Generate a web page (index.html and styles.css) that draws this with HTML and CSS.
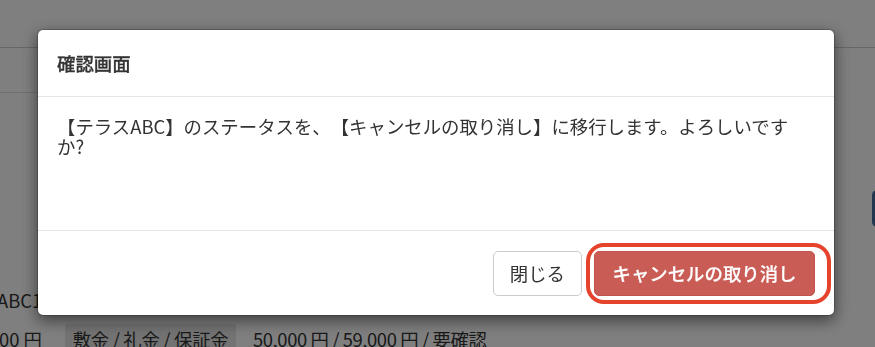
FILE: index.html
```html
<!DOCTYPE html>
<html lang="ja">
<head>
<meta charset="utf-8">
<title>確認画面</title>
<link rel="stylesheet" href="styles.css">
</head>
<body>
<div class="page">
  <div class="topbar"></div>
  <div class="subnav"></div>
  <div class="side-actions"><span class="side-btn"></span></div>
  <div class="row-name"><span class="name">ABC101</span></div>
  <div class="row-price">
    <div class="rent"><span>35,000 円</span></div>
    <span class="tag">敷金 / 礼金 / 保証金</span>
    <span class="fees">50,000 円 / 59,000 円 / 要確認</span>
  </div>
</div>

<div class="overlay"></div>

<div class="modal" role="dialog">
  <div class="modal-header">
    <h4 class="modal-title">確認画面</h4>
  </div>
  <div class="modal-body">
    <p class="message">【テラスABC】のステータスを、【キャンセルの取り消し】に移行します。よろしいですか?</p>
  </div>
  <div class="modal-footer">
    <button class="btn btn-default" type="button">閉じる</button>
    <span class="highlight"><button class="btn btn-danger" type="button">キャンセルの取り消し</button></span>
  </div>
</div>
</body>
</html>
```

FILE: styles.css
```css
html, body {
  margin: 0;
  padding: 0;
}

body {
  width: 875px;
  height: 347px;
  overflow: hidden;
  background: #ffffff;
  font-family: "Noto Sans CJK JP", "Noto Sans", sans-serif;
  font-size: 18.4px;
  color: #333333;
  text-spacing-trim: space-all;
}

/* ---------- background page ---------- */
.page {
  width: 875px;
}

.topbar {
  height: 47px;
  border-bottom: 1px solid #cfcfcf;
}

.subnav {
  width: 320px;
  height: 44px;
  border-bottom: 1px solid #e0e0e0;
}

.side-actions {
  display: flex;
  justify-content: flex-end;
  padding-top: 97px;
}

.side-btn {
  display: block;
  flex-shrink: 0;
  width: 64px;
  height: 37px;
  margin-right: -61px;
  border-radius: 5px;
  background: #47719c;
}

.row-name {
  margin-top: 61px;
  height: 24px;
  line-height: 24px;
  white-space: nowrap;
}

.name {
  display: inline-block;
  margin-left: -3px;
}

.row-price {
  display: flex;
  align-items: center;
  margin-top: 12px;
  height: 30px;
  white-space: nowrap;
}

.rent {
  display: flex;
  justify-content: flex-end;
  width: 42px;
  overflow: hidden;
  flex-shrink: 0;
}

.tag {
  flex-shrink: 0;
  box-sizing: border-box;
  width: 171px;
  margin-left: 23px;
  height: 30px;
  line-height: 30px;
  text-align: center;
  letter-spacing: -0.3px;
  background: #e6e6e6;
  border-radius: 3px;
}

.fees {
  margin-left: 17px;
  letter-spacing: -0.4px;
}

/* ---------- overlay + modal ---------- */
.overlay {
  position: fixed;
  inset: 0;
  background: rgba(0, 0, 0, 0.5);
}

.modal {
  position: fixed;
  top: 29px;
  left: 37px;
  width: 798px;
  height: 287px;
  box-sizing: border-box;
  display: flex;
  flex-direction: column;
  background: #ffffff;
  border: 1px solid rgba(0, 0, 0, 0.2);
  border-radius: 6px;
  box-shadow: 0 5px 15px rgba(0, 0, 0, 0.5);
  background-clip: padding-box;
}

.modal-header {
  height: 66px;
  display: flex;
  align-items: center;
  padding: 0 19px;
  border-bottom: 1px solid #e5e5e5;
}

.modal-title {
  margin: 0;
  font-size: 18.4px;
  font-weight: 500;
  line-height: 24px;
  color: #333333;
  -webkit-text-stroke: 0.3px #333333;
}

.modal-body {
  flex: 1;
  padding: 19px 19px 0;
}

.message {
  margin: 0;
  line-height: 20px;
}

.modal-footer {
  height: 84px;
  display: flex;
  justify-content: flex-end;
  align-items: center;
  gap: 12px;
  padding: 0 19px;
  border-top: 1px solid #e5e5e5;
}

.btn {
  height: 45px;
  padding: 0 16px;
  margin: 1px 0 0;
  font-family: inherit;
  font-size: 18.4px;
  line-height: 1;
  border-radius: 5px;
  border: 1px solid transparent;
  cursor: pointer;
}

.btn-default {
  background: #ffffff;
  border-color: #cccccc;
  color: #333333;
}

.btn-danger {
  display: block;
  width: 221px;
  background: #c95c55;
  border-color: #c4534d;
  color: #ffffff;
  font-weight: 500;
  -webkit-text-stroke: 0.2px #ffffff;
}

.highlight {
  position: relative;
  display: block;
}

.highlight::after {
  content: "";
  position: absolute;
  top: -7px;
  bottom: -8px;
  left: -8px;
  right: -16px;
  border: 4px solid #e5432b;
  border-radius: 18px;
  pointer-events: none;
}
```
